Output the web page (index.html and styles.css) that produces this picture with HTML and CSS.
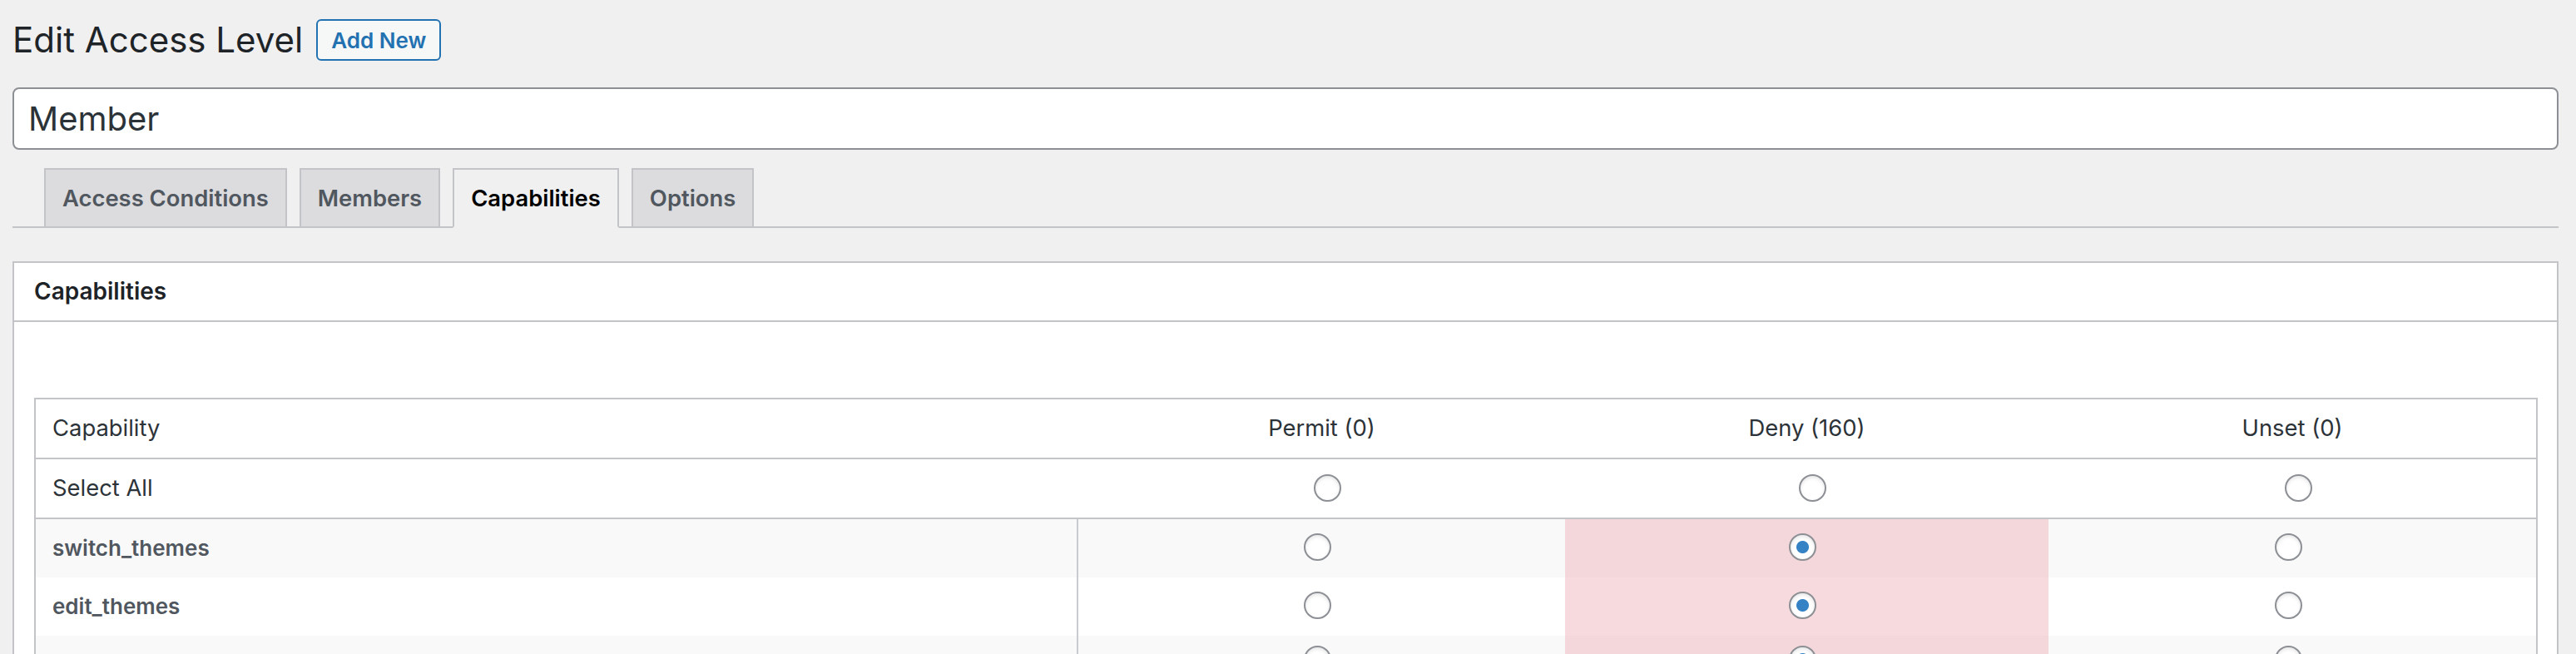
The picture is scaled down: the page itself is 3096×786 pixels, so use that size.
FILE: index.html
```html
<!DOCTYPE html>
<html lang="en">
<head>
<meta charset="utf-8">
<title>Edit Access Level</title>
<link rel="stylesheet" href="styles.css">
</head>
<body>
<div class="wrap">
  <div class="title-row">
    <h1 class="page-title">Edit Access Level</h1>
    <a class="btn-add" href="#">Add New</a>
  </div>
  <input class="title-input" type="text" value="Member">
  <nav class="tabs">
    <a class="tab" href="#">Access Conditions</a>
    <a class="tab" href="#">Members</a>
    <a class="tab tab-active" href="#">Capabilities</a>
    <a class="tab" href="#">Options</a>
  </nav>
  <div class="postbox">
    <div class="postbox-header"><h2 class="postbox-title">Capabilities</h2></div>
    <div class="inside">
      <div class="cap-table">
        <div class="row head">
          <div class="cell label">Capability</div>
          <div class="cell center">Permit (0)</div>
          <div class="cell center">Deny (160)</div>
          <div class="cell center">Unset (0)</div>
        </div>
        <div class="row head">
          <div class="cell label">Select All</div>
          <div class="cell center"><input class="radio radio-all" type="radio" name="all"></div>
          <div class="cell center"><input class="radio radio-all" type="radio" name="all"></div>
          <div class="cell center"><input class="radio radio-all" type="radio" name="all"></div>
        </div>
        <div class="row data odd">
          <div class="cell cap-name">switch_themes</div>
          <div class="cell center"><input class="radio" type="radio" name="c1"></div>
          <div class="cell center deny"><input class="radio" type="radio" name="c1" checked></div>
          <div class="cell center"><input class="radio" type="radio" name="c1"></div>
        </div>
        <div class="row data">
          <div class="cell cap-name">edit_themes</div>
          <div class="cell center"><input class="radio" type="radio" name="c2"></div>
          <div class="cell center deny"><input class="radio" type="radio" name="c2" checked></div>
          <div class="cell center"><input class="radio" type="radio" name="c2"></div>
        </div>
        <div class="row data odd">
          <div class="cell cap-name"></div>
          <div class="cell center"><input class="radio" type="radio" name="c3"></div>
          <div class="cell center deny"><input class="radio" type="radio" name="c3" checked></div>
          <div class="cell center"><input class="radio" type="radio" name="c3"></div>
        </div>
      </div>
    </div>
  </div>
</div>
</body>
</html>
```
FILE: styles.css
```css
html, body {
  margin: 0;
  padding: 0;
  background: #f0f0f1;
}
body {
  font-family: Inter, "Liberation Sans", Arial, sans-serif;
  color: #3c434a;
}
.wrap {
  padding: 0 21px 0 15px;
}
.title-row {
  display: flex;
  align-items: center;
  gap: 16px;
  padding-top: 23px;
}
.page-title {
  margin: 0;
  font-size: 42px;
  font-weight: 400;
  line-height: 50px;
  color: #1d2327;
}
.btn-add {
  display: inline-flex;
  align-items: center;
  box-sizing: border-box;
  height: 50px;
  padding: 0 16px;
  border: 2px solid #2271b1;
  border-radius: 6px;
  background: #f6f7f7;
  color: #2271b1;
  font-size: 26px;
  font-weight: 600;
  text-decoration: none;
}
.title-input {
  display: block;
  box-sizing: border-box;
  width: 100%;
  height: 75px;
  margin: 32px 0 0;
  padding: 0 17px;
  border: 2px solid #8c8f94;
  border-radius: 8px;
  background: #fff;
  color: #2c3338;
  font-family: Inter, "Liberation Sans", Arial, sans-serif;
  font-size: 40px;
  outline: none;
}
.tabs {
  display: flex;
  align-items: flex-start;
  margin-top: 22px;
  padding-left: 24px;
  border-bottom: 2px solid #c3c4c7;
}
.tab {
  margin-left: 15px;
  padding: 10px 20px;
  border: 2px solid #c3c4c7;
  border-bottom: none;
  background: #dcdcde;
  color: #50575e;
  font-size: 27.4px;
  font-weight: 600;
  line-height: 48px;
  text-decoration: none;
}
.tab:first-child {
  margin-left: 14px;
}
.tab-active {
  margin-bottom: -2px;
  border-bottom: 2px solid #f0f0f1;
  background: #f0f0f1;
  color: #000;
}
.postbox {
  margin-top: 40px;
  border: 2px solid #c3c4c7;
  background: #fff;
}
.postbox-header {
  padding: 0 24px;
  border-bottom: 2px solid #c3c4c7;
}
.postbox-title {
  margin: 0;
  font-size: 28px;
  font-weight: 600;
  line-height: 69px;
  color: #1d2327;
}
.inside {
  padding: 91px 23px 0 24px;
}
.cap-table {
  border: 2px solid #c3c4c7;
  border-bottom: none;
}
.row {
  display: grid;
  grid-template-columns: 1253px 585px 581px 1fr;
}
.cell {
  box-sizing: border-box;
  padding: 15px 20px 16px;
  font-size: 27.4px;
  line-height: 39px;
}
.head {
  border-bottom: 2px solid #c3c4c7;
  color: #2c3338;
}
.center {
  display: flex;
  align-items: center;
  justify-content: center;
  text-align: center;
}
.data .cell {
  padding: 16px 20px;
  font-size: 26px;
  line-height: 38px;
}
.data.odd {
  background: #f9f9f9;
}
.cap-name {
  border-right: 2px solid #c8cbd0;
  color: #50575e;
  font-weight: 600;
}
.deny {
  background: #f6dadd;
}
.odd .deny {
  background: #f3d7da;
}
.radio {
  -webkit-appearance: none;
  appearance: none;
  box-sizing: border-box;
  width: 33px;
  height: 33px;
  margin: -4px 10px 0 0;
  border: 2px solid #8c8f94;
  border-radius: 50%;
  background: #fff;
  box-shadow: inset 0 2px 4px rgba(0, 0, 0, 0.1);
}
.radio-all {
  margin: 0 0 0 14px;
}
.radio:checked {
  background: radial-gradient(circle, #3582c4 0, #3582c4 7px, #fff 8px);
}
```
